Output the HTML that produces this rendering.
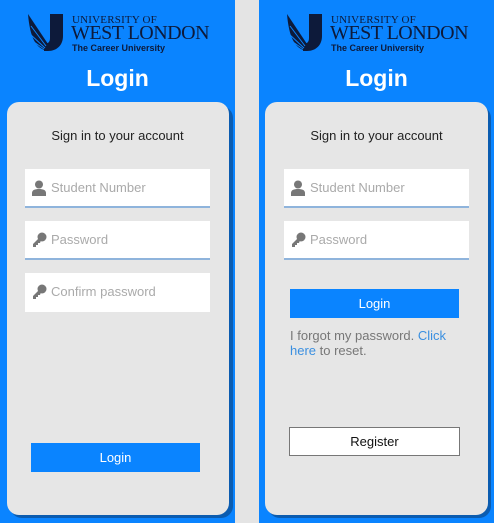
<!DOCTYPE html>
<html><head><style>
*{margin:0;padding:0;box-sizing:border-box}
body{width:494px;height:523px;background:#e4e4e4;font-family:"Liberation Sans",sans-serif;position:relative;overflow:hidden}
.panel{position:absolute;top:0;width:235px;height:523px;background:#0a84ff}
.shadow{position:absolute;background:#0b5cb0;border-radius:12px}
.card{position:absolute;background:#e6e6e6;border-radius:12px}
.logo{position:absolute;top:14px;left:28px;width:190px;height:40px;white-space:nowrap}
.t1{position:absolute;left:44px;top:0px;font-family:"Liberation Serif",serif;font-size:11px;color:#0d1a3a;letter-spacing:.2px}
.t2{position:absolute;left:43px;top:8px;font-family:"Liberation Serif",serif;font-size:20px;line-height:22px;color:#0d1a3a;letter-spacing:-.5px}
.t3{position:absolute;left:44px;top:29px;font-size:9px;font-weight:bold;color:#0d1a3a}
h1{position:absolute;top:65px;width:100%;text-align:center;color:#fff;font-size:23px;font-weight:bold}
.sub{position:absolute;top:128px;width:100%;text-align:center;font-size:13px;color:#222}
.inp{position:absolute;width:185px;height:39px;background:#fff;border-bottom:2px solid #8fb4dc;font-size:13px;color:#aaa;padding:11px 0 0 26px}
.ic{position:absolute;left:7px;top:11px}
.btn{position:absolute;height:29px;background:#0a84ff;color:#fff;font-size:13px;text-align:center;line-height:29px}
</style></head><body>
<div class="panel" style="left:0">
 <div class="shadow" style="left:10px;top:106px;width:223px;height:412px"></div>
 <div class="card" style="left:7px;top:102px;width:222px;height:413px"></div>
</div>
<div class="panel" style="left:259px">
 <div class="shadow" style="left:9px;top:106px;width:223px;height:412px"></div>
 <div class="card" style="left:6px;top:102px;width:223px;height:413px"></div>
</div>

<div class="logo"><svg width="42" height="38" viewBox="0 0 42 38" style="position:absolute;left:0;top:0"><path d="M22 0h13v22c0 9-6 15-15 15h-4V30c4 0 6-2 6-6z" fill="#0d1a3a"/><path d="M0 0l20 30v7C8 35 2 24 0 0z" fill="#0d1a3a"/><path d="M3 12l15 20M2 20l15 14M6 28l10 7" stroke="#0a84ff" stroke-width="1"/></svg><div class="t1">UNIVERSITY OF</div><div class="t2">WEST LONDON</div><div class="t3">The Career University</div></div>
<div class="logo" style="left:287px"><svg width="42" height="38" viewBox="0 0 42 38" style="position:absolute;left:0;top:0"><path d="M22 0h13v22c0 9-6 15-15 15h-4V30c4 0 6-2 6-6z" fill="#0d1a3a"/><path d="M0 0l20 30v7C8 35 2 24 0 0z" fill="#0d1a3a"/><path d="M3 12l15 20M2 20l15 14M6 28l10 7" stroke="#0a84ff" stroke-width="1"/></svg><div class="t1">UNIVERSITY OF</div><div class="t2">WEST LONDON</div><div class="t3">The Career University</div></div>

<div style="position:absolute;left:0;top:0;width:235px;height:523px">
 <h1>Login</h1><div class="sub">Sign in to your account</div>
</div>
<div style="position:absolute;left:259px;top:0;width:235px;height:523px">
 <h1>Login</h1><div class="sub">Sign in to your account</div>
</div>

<div class="inp" style="left:25px;top:169px"><svg class="ic" width="14" height="16" viewBox="0 0 14 16"><circle cx="7" cy="4.5" r="4" fill="#777"/><path d="M0 16v-3c0-3 3-4 7-4s7 1 7 4v3z" fill="#777"/></svg>Student Number</div>
<div class="inp" style="left:25px;top:221px"><svg class="ic" width="15" height="15" viewBox="0 0 15 15"><circle cx="10" cy="5" r="4.5" fill="#777"/><path d="M7 6L1 12v3h3v-2h2v-2h2l1-3z" fill="#777"/></svg>Password</div>
<div class="inp" style="left:25px;top:273px;border-bottom:none"><svg class="ic" width="15" height="15" viewBox="0 0 15 15"><circle cx="10" cy="5" r="4.5" fill="#777"/><path d="M7 6L1 12v3h3v-2h2v-2h2l1-3z" fill="#777"/></svg>Confirm password</div>
<div class="btn" style="left:31px;top:443px;width:169px">Login</div>

<div class="inp" style="left:284px;top:169px"><svg class="ic" width="14" height="16" viewBox="0 0 14 16"><circle cx="7" cy="4.5" r="4" fill="#777"/><path d="M0 16v-3c0-3 3-4 7-4s7 1 7 4v3z" fill="#777"/></svg>Student Number</div>
<div class="inp" style="left:284px;top:221px"><svg class="ic" width="15" height="15" viewBox="0 0 15 15"><circle cx="10" cy="5" r="4.5" fill="#777"/><path d="M7 6L1 12v3h3v-2h2v-2h2l1-3z" fill="#777"/></svg>Password</div>
<div class="btn" style="left:290px;top:289px;width:169px">Login</div>
<div style="position:absolute;left:290px;top:328px;width:170px;font-size:13px;line-height:15px;color:#777">I forgot my password. <span style="color:#3a8fe0">Click here</span> to reset.</div>
<div style="position:absolute;left:289px;top:427px;width:171px;height:29px;background:#fff;border:1px solid #777;font-size:13px;text-align:center;line-height:27px;color:#111">Register</div>
</body></html>
